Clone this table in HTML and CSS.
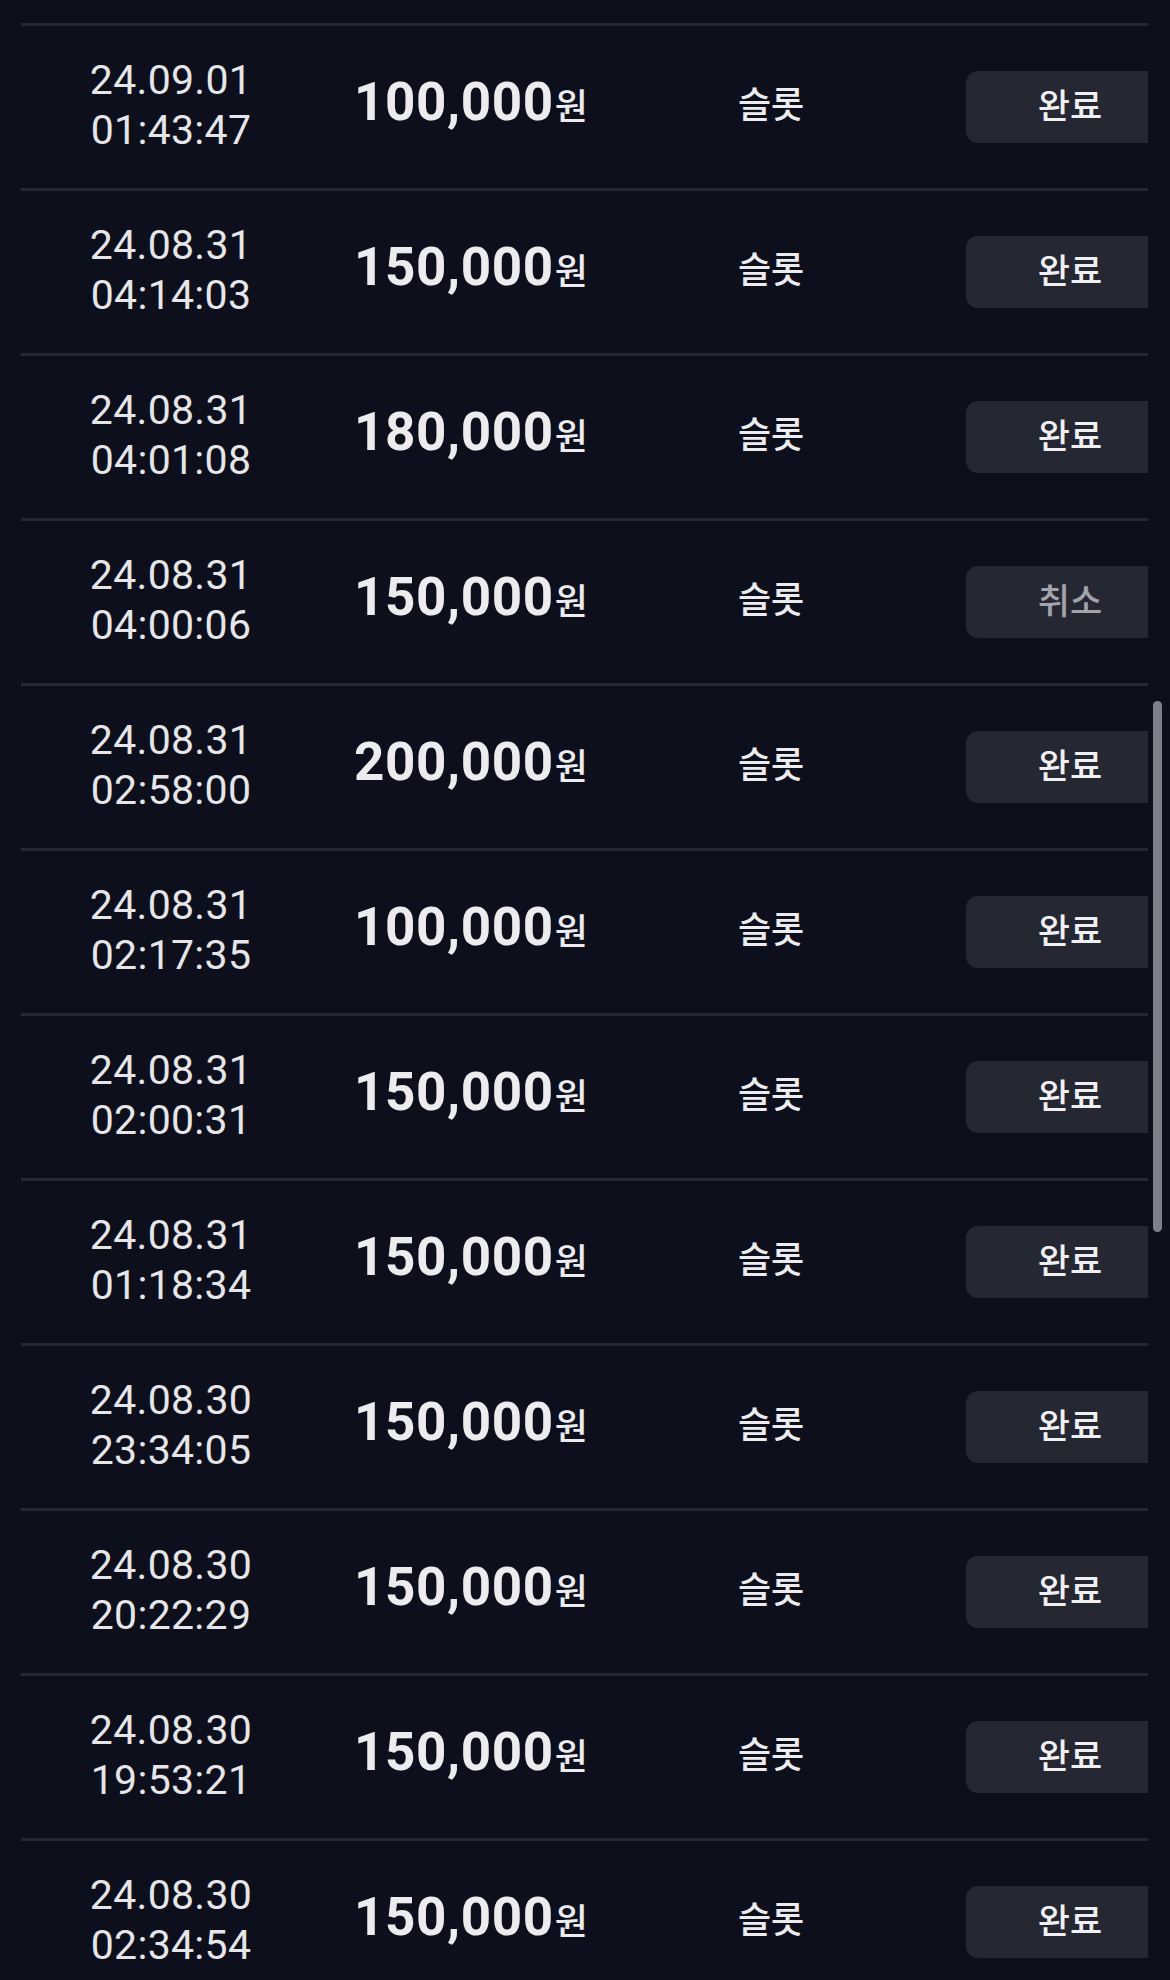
FILE: index.html
```html
<!DOCTYPE html>
<html lang="ko">
<head>
<meta charset="utf-8">
<link rel="stylesheet" href="styles.css">
</head>
<body>
<div class="list">
  <div class="row"><div class="date">24.09.01<br>01:43:47</div><div class="amount">100,000<span class="won">원</span></div><div class="type">슬롯</div><div class="status"><span class="badge">완료</span></div></div>
  <div class="row"><div class="date">24.08.31<br>04:14:03</div><div class="amount">150,000<span class="won">원</span></div><div class="type">슬롯</div><div class="status"><span class="badge">완료</span></div></div>
  <div class="row"><div class="date">24.08.31<br>04:01:08</div><div class="amount">180,000<span class="won">원</span></div><div class="type">슬롯</div><div class="status"><span class="badge">완료</span></div></div>
  <div class="row"><div class="date">24.08.31<br>04:00:06</div><div class="amount">150,000<span class="won">원</span></div><div class="type">슬롯</div><div class="status"><span class="badge muted">취소</span></div></div>
  <div class="row"><div class="date">24.08.31<br>02:58:00</div><div class="amount">200,000<span class="won">원</span></div><div class="type">슬롯</div><div class="status"><span class="badge">완료</span></div></div>
  <div class="row"><div class="date">24.08.31<br>02:17:35</div><div class="amount">100,000<span class="won">원</span></div><div class="type">슬롯</div><div class="status"><span class="badge">완료</span></div></div>
  <div class="row"><div class="date">24.08.31<br>02:00:31</div><div class="amount">150,000<span class="won">원</span></div><div class="type">슬롯</div><div class="status"><span class="badge">완료</span></div></div>
  <div class="row"><div class="date">24.08.31<br>01:18:34</div><div class="amount">150,000<span class="won">원</span></div><div class="type">슬롯</div><div class="status"><span class="badge">완료</span></div></div>
  <div class="row"><div class="date">24.08.30<br>23:34:05</div><div class="amount">150,000<span class="won">원</span></div><div class="type">슬롯</div><div class="status"><span class="badge">완료</span></div></div>
  <div class="row"><div class="date">24.08.30<br>20:22:29</div><div class="amount">150,000<span class="won">원</span></div><div class="type">슬롯</div><div class="status"><span class="badge">완료</span></div></div>
  <div class="row"><div class="date">24.08.30<br>19:53:21</div><div class="amount">150,000<span class="won">원</span></div><div class="type">슬롯</div><div class="status"><span class="badge">완료</span></div></div>
  <div class="row"><div class="date">24.08.30<br>02:34:54</div><div class="amount">150,000<span class="won">원</span></div><div class="type">슬롯</div><div class="status"><span class="badge">완료</span></div></div>
</div>
<div class="scrollbar"></div>
</body>
</html>
```
FILE: styles.css
```css
html, body {
  margin: 0;
  padding: 0;
  background: #0d101c;
  height: 1980px;
  overflow: hidden;
}
body {
  color: #e8e8ea;
  font-family: Roboto, "Noto Sans CJK KR", sans-serif;
}
.list {
  margin-left: 21px;
  width: 1127px;
  padding-top: 23px;
  overflow: hidden;
}
.row {
  display: grid;
  grid-template-columns: 300px 300px 300px 227px;
  align-items: center;
  height: 162px;
  border-top: 3px solid #252834;
}
.date {
  text-align: center;
  font-family: Roboto, sans-serif;
  font-size: 41px;
  line-height: 50px;
  color: #e6e6e8;
  letter-spacing: 0.3px;
  margin-top: -4px;
}
.amount {
  text-align: center;
  font-family: Roboto, sans-serif;
  font-weight: 700;
  font-size: 53px;
  letter-spacing: 0.6px;
  color: #ececee;
  margin-top: -10px;
}
.won {
  font-family: "Noto Sans CJK KR", sans-serif;
  font-weight: 500;
  font-size: 36px;
  letter-spacing: 0;
  margin-left: 1px;
}
.type {
  text-align: center;
  font-family: "Noto Sans CJK KR", sans-serif;
  font-size: 36px;
  font-weight: 500;
  color: #ececee;
  margin-top: -10px;
}
.status {
  padding-left: 45px;
}
.badge {
  display: flex;
  align-items: center;
  justify-content: center;
  box-sizing: border-box;
  width: 208px;
  height: 72px;
  padding-bottom: 8px;
  border-radius: 12px;
  background: #252733;
  font-family: "Noto Sans CJK KR", sans-serif;
  font-size: 35px;
  font-weight: 500;
  color: #f0f0f2;
}
.badge.muted {
  color: #a3a3ab;
}
.scrollbar {
  position: absolute;
  left: 1153px;
  top: 701px;
  width: 9px;
  height: 531px;
  border-radius: 5px;
  background: #7f7f89;
}
```
